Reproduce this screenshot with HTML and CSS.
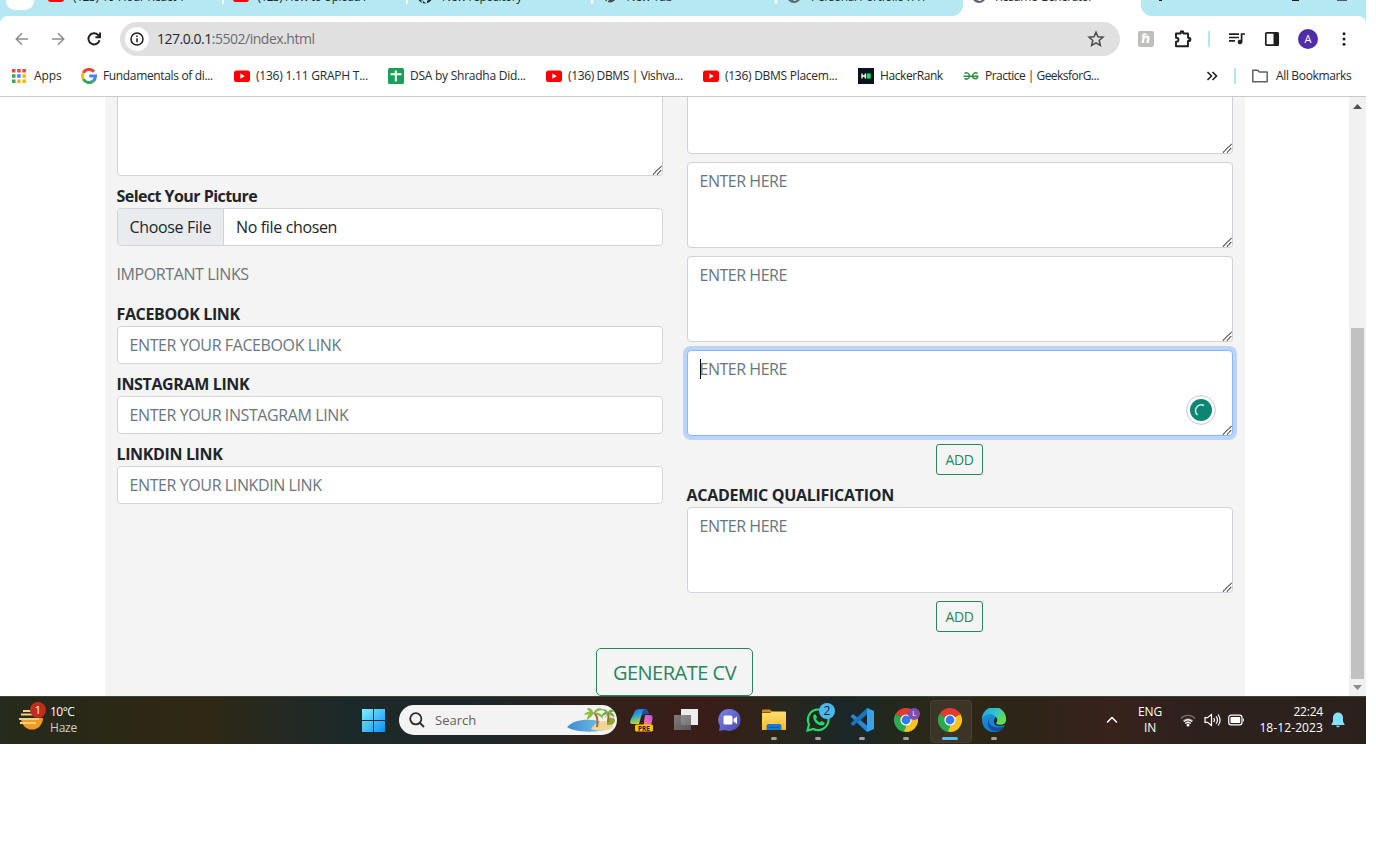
FILE: index.html
```html
<!DOCTYPE html>
<html lang="en">
<head>
<meta charset="utf-8">
<title>Resume Generator</title>
<link rel="stylesheet" href="styles.css">
</head>
<body>
<svg class="defs" width="0" height="0">
  <defs>
    <symbol id="yt" viewBox="0 0 16 16"><rect y="2.5" width="16" height="11.5" rx="2.6" fill="#f00"/><path d="M6.4 5.6v5.2l4.4-2.6z" fill="#fff"/></symbol>
    <symbol id="globe" viewBox="0 0 16 16"><circle cx="8" cy="8" r="6" fill="none" stroke="#5f6368" stroke-width="2"/><path d="M3 6l4 1 1 3-2 3M9 2l3 3-2 3 3 2" fill="none" stroke="#5f6368" stroke-width="1.5"/></symbol>
    <symbol id="chrome" viewBox="0 0 24 24"><path d="M12 12L1.6 6A12 12 0 0 1 22.4 6z" fill="#e33b2e"/><path d="M12 12L22.4 6A12 12 0 0 1 12 24z" fill="#fcc31e"/><path d="M12 12L12 24A12 12 0 0 1 1.6 6z" fill="#2da94f"/><path d="M12 6.5h10.6L21 4H11z" fill="#e33b2e"/><path d="M16.8 14.7L12 24l-2-1 3-6z" fill="#fcc31e"/><path d="M7.2 14.8L1.6 6 1 8l4 8z" fill="#2da94f"/><circle cx="12" cy="12" r="5.6" fill="#fff"/><circle cx="12" cy="12" r="4.4" fill="#2f7cf0"/></symbol>
    <symbol id="grip" viewBox="0 0 10 10"><path d="M1 9.5L9.5 1M5 9.5L9.5 5" fill="none" stroke="#222" stroke-width="1.1" stroke-dasharray="1.2 .4"/></symbol>
    <linearGradient id="win" x1="0" y1="0" x2="1" y2="1"><stop offset="0" stop-color="#7ff0ff"/><stop offset="1" stop-color="#0a90f5"/></linearGradient>
    <linearGradient id="cop1" x1="0" y1="0" x2="0.3" y2="1"><stop offset="0" stop-color="#1c6ee0"/><stop offset=".5" stop-color="#2fa5cf"/><stop offset="1" stop-color="#c5d52d"/></linearGradient>
    <linearGradient id="cop2" x1="1" y1="0" x2="0" y2="1"><stop offset="0" stop-color="#a45cf0"/><stop offset=".5" stop-color="#e867b8"/><stop offset="1" stop-color="#ff9b50"/></linearGradient>
    <linearGradient id="tv" x1="0" y1="0" x2="1" y2="1"><stop offset="0" stop-color="#8a8a8a"/><stop offset="1" stop-color="#5e5e5e"/></linearGradient>
    <linearGradient id="chat" x1="0" y1="0" x2="1" y2="1"><stop offset="0" stop-color="#7b83e8"/><stop offset="1" stop-color="#4b4ab0"/></linearGradient>
    <linearGradient id="fold" x1="0" y1="0" x2="0" y2="1"><stop offset="0" stop-color="#ffdf73"/><stop offset="1" stop-color="#fbb92c"/></linearGradient>
    <linearGradient id="edgeA" x1="0" y1="0" x2="1" y2=".5"><stop offset="0" stop-color="#1fa3dc"/><stop offset=".55" stop-color="#2fc5cf"/><stop offset="1" stop-color="#68dc4a"/></linearGradient>
    <linearGradient id="edgeB" x1="0" y1="0" x2="0" y2="1"><stop offset="0" stop-color="#1c8fd8"/><stop offset="1" stop-color="#1378cf"/></linearGradient>
    <linearGradient id="sea" x1="0" y1="0" x2="1" y2="0"><stop offset="0" stop-color="#3d8ed2"/><stop offset="1" stop-color="#7cc6ee"/></linearGradient>
  </defs>
</svg>
<div class="screen">
  <header class="tabs">
    <div class="tabs-left">
      <span class="tab-search"></span>
      <div class="tab"><svg class="fav"><use href="#yt"/></svg><span>(123) 10-Hour React T</span></div>
      <div class="tab"><svg class="fav"><use href="#yt"/></svg><span class="tight">(123) How to Upload I</span></div>
      <div class="tab"><svg class="fav" viewBox="0 0 16 16"><circle cx="8" cy="8" r="7.5" fill="#24292f"/><path d="M6 16v-3c-2 0-2-2-3-2m7 5v-3c3-1 3-6 1-7l-6 0c-2 2-1 6 1 7z" fill="#b6e8f2"/></svg><span>New repository</span></div>
      <div class="tab"><svg class="fav" viewBox="0 0 16 16"><circle cx="8" cy="8" r="6.5" fill="#45505a"/><path d="M8 8l-3 6M8 8h6" stroke="#b6e8f2" stroke-width="1.5"/></svg><span>New Tab</span></div>
      <div class="tab last"><svg class="fav"><use href="#globe"/></svg><span>Personal Portfolio : A P</span></div>
    </div>
    <div class="tab active"><svg class="fav"><use href="#globe"/></svg><span>Resume Generator</span></div>
    <div class="tabs-right"><i class="w1"></i><i class="w2"></i><i class="w3"></i></div>
  </header>

  <div class="bar-back">
  <nav class="toolbar">
    <svg class="tb" viewBox="0 0 20 20" fill="none" stroke="#8f8f8f" stroke-width="1.6"><path d="M16 10H4.5M10 4.3L4.3 10l5.7 5.7"/></svg>
    <svg class="tb fwd" viewBox="0 0 20 20" fill="none" stroke="#8f8f8f" stroke-width="1.6"><path d="M4 10h11.500M10 4.300l5.700 5.700-5.700 5.700"/></svg>
    <svg class="tb rel" viewBox="0 0 20 20" fill="none" stroke="#1f1f1f" stroke-width="1.9"><path d="M15.500 11.200a5.600 5.600 0 1 1-1.400-5.200l1.600 1.700"/><path d="M16 3.600v4.600h-4.600"/></svg>
    <div class="omnibox">
      <span class="info"><svg width="14" height="14" viewBox="0 0 14 14" fill="none" stroke="#1f1f1f"><circle cx="7" cy="7" r="6" stroke-width="1.5"/><path d="M7 6.200v4M7 3.600v1.500" stroke-width="1.500"/></svg></span>
      <span class="url"><b>127.0.0.1</b>:5502/index.html</span>
      <svg class="star" viewBox="0 0 18 18" fill="none" stroke="#4a4a4a" stroke-width="1.500"><path d="M9 2.200l2 4.600 5 .4-3.800 3.300 1.200 4.900L9 12.800l-4.400 2.600 1.200-4.900L2 7.200l5-.4z"/></svg>
    </div>
    <span class="honey">ℏ</span>
    <svg class="puzzle" viewBox="0 0 20 20"><path d="M3 4.500h4.500v-.8a1.500 1.500 0 0 1 3 0v.8h4.500v4.300h.8a1.600 1.600 0 0 1 0 3.200h-.8v5.200H3v-4.500c3.300 0 3.300-4 0-4z" fill="none" stroke="#1f1f1f" stroke-width="1.900" stroke-linejoin="round"/><path d="M7.500 4.500a1.800 1.800 0 0 1 3.400 0zM15.500 8.500a1.900 1.900 0 0 1 0 3.600z" fill="#1f1f1f"/></svg>
    <span class="vline"></span>
    <svg class="music" viewBox="0 0 18 18" fill="none" stroke="#1f1f1f" stroke-width="1.700"><path d="M1 4.200h10M1 7.500h10M1 10.800h6M13.600 12V4h3.400"/><circle cx="12" cy="12" r="1.900" fill="#1f1f1f" stroke-width="1"/></svg>
    <svg class="side" viewBox="0 0 16 16"><rect x="1.800" y="1.800" width="12.400" height="12.400" rx="1" fill="none" stroke="#1f1f1f" stroke-width="1.700"/><path d="M9.500 1.500h5v13h-5z" fill="#1f1f1f"/></svg>
    <span class="avatar">A</span>
    <svg class="dots" viewBox="0 0 4 16" fill="#1f1f1f"><circle cx="2" cy="2.700" r="1.500"/><circle cx="2" cy="8" r="1.500"/><circle cx="2" cy="13.300" r="1.500"/></svg>
  </nav>
  </div>

  <nav class="bookmarks">
    <a class="b1"><svg viewBox="0 0 16 16"><path d="M1 1h3.500v3.500H1zM6.200 1h3.500v3.500H6.200zM11.400 1h3.500v3.500h-3.500z" fill="#dc4b3e"/><path d="M1 6.200h3.500v3.500H1zM1 11.400h3.500v3.500H1z" fill="#34a853"/><path d="M6.200 6.200h3.500v3.500H6.200z" fill="#4285f4"/><path d="M11.400 6.200h3.500v3.500h-3.500zM6.200 11.400h3.500v3.500H6.200zM11.400 11.400h3.500v3.500h-3.500z" fill="#f4b80c"/></svg><span>Apps</span></a>
    <a class="b2"><svg viewBox="0 0 16 16" fill="none" stroke-width="3"><path d="M13 3.700A6.500 6.500 0 0 0 2.300 4.900" stroke="#ea4335"/><path d="M2.300 4.900a6.500 6.500 0 0 0 0 6.200" stroke="#fbbc04"/><path d="M2.300 11.100A6.500 6.500 0 0 0 12.200 13" stroke="#34a853"/><path d="M12.200 13a6.300 6.300 0 0 0 2.300-4.900H8.200" stroke="#4285f4"/></svg><span>Fundamentals of di...</span></a>
    <a class="b3"><svg><use href="#yt"/></svg><span>(136) 1.11 GRAPH T...</span></a>
    <a class="b4"><svg viewBox="0 0 16 16"><rect width="16" height="16" rx="1.500" fill="#16a05a"/><path d="M2.500 6.300h11M7.800 2.500v11" stroke="#fff" stroke-width="2"/></svg><span>DSA by Shradha Did...</span></a>
    <a class="b5"><svg><use href="#yt"/></svg><span>(136) DBMS | Vishva...</span></a>
    <a class="b6"><svg><use href="#yt"/></svg><span>(136) DBMS Placem...</span></a>
    <a class="b7"><svg viewBox="0 0 16 16"><path d="M0 0h16v16H0z" fill="#0e141e"/><path d="M4 5.500v5M7.300 5.500v5M4 8h3" stroke="#fff" stroke-width="1.300"/><path d="M8.700 5.500h4v5h-4z" fill="#1ce06a"/></svg><span>HackerRank</span></a>
    <a class="b8"><svg viewBox="0 0 16 16" fill="none" stroke="#2f8d46" stroke-width="1.500"><path d="M.5 8.200h15M1.500 5.500c2-1.500 5-.5 5 2.500s-3.300 4-5 2.200M14.500 5.500c-2-1.500-5-.5-5 2.500s4.900 4 5.200.4"/></svg><span>Practice | GeeksforG...</span></a>
    <svg class="more" viewBox="0 0 12 10" fill="none" stroke="#1f1f1f" stroke-width="1.600"><path d="M1.500 1l4 4-4 4M6.500 1l4 4-4 4"/></svg>
    <span class="vline v2"></span>
    <a class="b9"><svg viewBox="0 0 16 16"><path d="M.8 2.300h5l1.600 1.800h7.800v9.600H.8z" fill="none" stroke="#5f6368" stroke-width="1.500" stroke-linejoin="round"/></svg><span>All Bookmarks</span></a>
  </nav>

  <main class="viewport">
    <div class="sheet">
      <div class="cols">
        <section class="col">
          <div class="area cut-l"><textarea></textarea><svg class="grip"><use href="#grip"/></svg></div>
          <label class="t-pic">Select Your Picture</label>
          <div class="file"><span class="choose">Choose File</span><span class="nofile">No file chosen</span></div>
          <p class="muted">IMPORTANT LINKS</p>
          <label>FACEBOOK LINK</label>
          <input type="text" placeholder="ENTER YOUR FACEBOOK LINK">
          <label>INSTAGRAM LINK</label>
          <input type="text" placeholder="ENTER YOUR INSTAGRAM LINK">
          <label>LINKDIN LINK</label>
          <input type="text" placeholder="ENTER YOUR LINKDIN LINK">
        </section>
        <section class="col">
          <div class="area cut-r"><textarea></textarea><svg class="grip"><use href="#grip"/></svg></div>
          <div class="area"><textarea placeholder="ENTER HERE"></textarea><svg class="grip"><use href="#grip"/></svg></div>
          <div class="area"><textarea placeholder="ENTER HERE"></textarea><svg class="grip"><use href="#grip"/></svg></div>
          <div class="area focused"><textarea placeholder="ENTER HERE"></textarea><svg class="grip"><use href="#grip"/></svg><span class="caret"></span>
            <svg class="grammar" viewBox="0 0 30 30"><circle cx="15" cy="15" r="14.400" fill="#fff" stroke="#c5c8d8"/><circle cx="15" cy="15" r="11" fill="#0c8573"/><path d="M18 10.500a5.800 5.800 0 0 0-6.500 9.500" fill="none" stroke="#cfeee8" stroke-width="1.600"/></svg></div>
          <button class="add">ADD</button>
          <label class="t-acad">ACADEMIC QUALIFICATION</label>
          <div class="area flush"><textarea placeholder="ENTER HERE"></textarea><svg class="grip"><use href="#grip"/></svg></div>
          <button class="add">ADD</button>
        </section>
      </div>
      <button class="generate">GENERATE CV</button>
    </div>
    <aside class="scroll"><svg viewBox="0 0 9 5"><path d="M4.500 0L9 5H0z" fill="#505050"/></svg><div class="thumb"></div><svg viewBox="0 0 9 5"><path d="M0 0h9L4.500 5z" fill="#8c8c8c"/></svg></aside>
  </main>

  <footer class="taskbar">
    <div class="weather">
      <svg viewBox="0 0 28 30"><path d="M3 16h22a11 11.500 0 0 1-22 0z" fill="#f39a24"/><path d="M5 9h8M3 12.500h18M1 17h20M2 21h16" stroke="#f5cf83" stroke-width="1.800"/><circle cx="20" cy="8" r="8" fill="#c42b1f"/><text x="20" y="12" text-anchor="middle" fill="#fff" class="badge-text">1</text></svg>
      <div class="wtext"><span>10°C</span><small>Haze</small></div>
    </div>
    <svg class="start" viewBox="0 0 23 23"><path d="M0 0h11v11H0zM12 0h11v11H12zM0 12h11v11H0zM12 12h11v11H12z" fill="url(#win)"/></svg>
    <div class="search">
      <svg class="lens" viewBox="0 0 16 16" fill="none" stroke="#2b2b2b" stroke-width="1.800"><circle cx="6.800" cy="6.800" r="5.600"/><path d="M11 11l4 4"/></svg>
      <span>Search</span>
      <svg class="beach" viewBox="0 0 50 26"><path d="M0 20C6 13 20 11 32 14l10 7c-7 5-35 5-42-1z" fill="url(#sea)"/><path d="M24 22c5-8 14-9 19-7 4 2 4 5 0 7-5 2-15 2-19 0z" fill="#f2d493"/><path d="M40 12q7-3 8 1c0 4-3 5-8 5z" fill="#90a83a"/><path d="M27 5q5 6 3 15M41 6q1 4 0 9" stroke="#a36a34" stroke-width="2" fill="none"/><path d="M27 6c-4-3-8-1-10 2 4-1 6 0 10-2zM27 6c-5 0-7 3-7 7 3-2 5-4 7-7zM27 6c1-5 6-6 10-3-4 0-6 1-10 3zM27 6c5-1 9 1 9 6-3-3-5-4-9-6zM26 6c0-4-3-5-6-5 1 3 3 4 6 5z" fill="#8abb42"/><path d="M41 6c-3-2-5 0-6 3l6-3c4-1 6 1 6 4l-6-4c1-3 3-4 6-2l-6 2c-1-3-3-4-5-3zM41 6l-3 5M41 6l3 5" fill="#6da640" stroke="#6da640" stroke-width=".6"/></svg>
    </div>
    <div class="apps">
      <div class="app"><svg viewBox="0 0 24 24"><path d="M5 3Q6 1 9 1h6q2 0 3 3l.5 2H14q-2 0-3 3l-2 7H3q-4 0-2.500-4z" fill="url(#cop1)"/><path d="M15 7h5q3 0 2.500 4l-1.500 7h-9q2 0 2-4z" fill="url(#cop2)"/><path d="M11 9q1-3 3-3h4.500L18 4q-1-3-3-3-2 0-3 4z" fill="#1b4fb5"/><rect x="5" y="16.500" width="18" height="7" rx="1.500" fill="#ffc20e"/><text x="14" y="22.500" text-anchor="middle" class="pre">PRE</text></svg></div>
      <div class="app"><svg viewBox="0 0 24 24"><path d="M7 1h17v16H7z" fill="#ececec"/><path d="M0 7h17v15H0z" fill="url(#tv)" fill-opacity=".88"/></svg></div>
      <div class="app"><svg viewBox="0 0 24 24"><path d="M12 1a11 11 0 1 1-5 21L1 23l1-5A11 11 0 0 1 12 1z" fill="url(#chat)"/><rect x="5.500" y="7.500" width="9" height="9" rx="1.500" fill="#fff"/><path d="M15.500 11l3.500-2.500v7.500l-3.500-2.500z" fill="#fff"/></svg></div>
      <div class="app run"><svg viewBox="0 0 24 24"><path d="M0 2.500Q0 1.500 1 1.500h7l3 3H0z" fill="#d58b12"/><path d="M0 5h8l2-1.500h13q1 0 1 1V22H0z" fill="url(#fold)"/><path d="M4.500 22v-4q0-2 2-2h11q2 0 2 2v4z" fill="#1479cf"/><path d="M7 19.500h10" stroke="#0c5ba8"/></svg></div>
      <div class="app run"><svg viewBox="0 0 24 24"><path d="M1.500 22.500l1.500-6A10.300 10.300 0 1 1 7.500 21z" fill="none" stroke="#2bd567" stroke-width="2.200"/><path d="M7.500 7q2-2 3 1l.5 1.500-1 1.500q1.500 2.500 4 3.500l1.500-1.500 3 1.500q.5 3-3 3C11 17.500 6 12 7.500 7z" fill="#2bd567"/></svg><span class="badge">2</span></div>
      <div class="app run"><svg viewBox="0 0 24 24"><path d="M17 17.500L3 6 .5 8.500 17 24z" fill="#2489d8"/><path d="M17 0v6.500L3 18 .5 15.500z" fill="#1a75c0"/><path d="M17 0l7 3v18l-7 3z" fill="#31a5f0"/></svg></div>
      <div class="app run"><svg><use href="#chrome"/></svg><span class="badge purple">L</span></div>
      <div class="app run on"><svg><use href="#chrome"/></svg></div>
      <div class="app run"><svg viewBox="0 0 24 24"><path d="M0 11C1 4 8 5 14 8l-2 4c-1 4 3 8 11 5A12 12 0 0 1 0 12z" fill="url(#edgeB)"/><path d="M7 12c-1 6 6 9.500 15.500 6.500C18 25 8 25 6 17c-1-4 1-7 5-8q-3.500 0-4 3z" fill="#114f98"/><path d="M0 11A12 12 0 0 1 24 11c.5 5-4 6.500-8 5.500-2-.7-2.200-1.500-1.300-2.500 1-1.300.8-3-.2-4.300C11 5 3 5 0 11z" fill="url(#edgeA)"/></svg></div>
    </div>
    <div class="tray">
      <svg class="chev" viewBox="0 0 12 8" fill="none" stroke="#fff" stroke-width="1.500"><path d="M1 6.500l5-5 5 5"/></svg>
      <div class="lang"><span>ENG</span><span>IN</span></div>
      <svg class="wifi" viewBox="0 0 16 14" fill="none"><path d="M1 5.500a9.500 9.500 0 0 1 14 0" stroke="#796c67" stroke-width="1.300"/><path d="M3 8a7 7 0 0 1 10 0" stroke="#796c67" stroke-width="1.300"/><path d="M3.800 8.500q4.200-3.500 8.400 0M5.200 10.500q2.800-2.500 5.600 0" stroke="#fff" stroke-width="1.300"/><circle cx="8" cy="12" r="1.500" fill="#fff"/></svg>
      <svg class="vol" viewBox="0 0 17 14" fill="none" stroke="#fff" stroke-width="1.200"><path d="M1 4.700h2.500L7.500 1.500v11L3.500 9.300H1zM9.700 5q1.500 2 0 4M12 3.300q3 3.700 0 7.400M14 1.500q4.200 5.500 0 11"/></svg>
      <svg class="bat" viewBox="0 0 17 12"><rect x=".7" y="1.200" width="13.300" height="9.600" rx="2.300" fill="none" stroke="#fff" stroke-width="1.200"/><rect x="2.500" y="3" width="9.700" height="6" rx=".8" fill="#fff"/><path d="M15 4q2 2 0 4z" fill="#fff"/></svg>
      <div class="clock"><span>22:24</span><span class="date">18-12-2023</span></div>
      <svg class="bell" viewBox="0 0 14 16" fill="#85e2ff"><path d="M7 .500a5 5 0 0 1 5 5v4l1.800 3.500H.2L2 9.500v-4a5 5 0 0 1 5-5zM4.800 13.800h4.400q-2.200 3-4.400 0z"/></svg>
    </div>
  </footer>
</div>
</body>
</html>
```
FILE: styles.css
```css
* { box-sizing: border-box; }
body { margin: 0; background: #fff; font-family: "Open Sans", "Noto Sans", sans-serif; color: #212529; overflow: hidden; }
.defs { position: absolute; }
.screen { width: 1366px; height: 744px; display: flex; flex-direction: column; overflow: hidden; }
svg { display: block; flex: none; }

/* tab strip */
.tabs { height: 16px; flex: none; display: flex; overflow: hidden; font-size: 12px; color: #1f2a30; }
.tabs-left { width: 963px; background: #b6e8f2; border-bottom-right-radius: 11px; display: flex; padding-left: 6px; }
.tab-search { width: 28px; height: 10px; background: #fff; border-radius: 0 0 9px 9px; margin-right: 5px; }
.tab { width: 184.500px; height: 16px; display: flex; padding-left: 9px; position: relative; overflow: hidden; }
.tabs-left .tab:not(.last)::after { content: ""; position: absolute; right: 0; top: 0; width: 2px; height: 4px; background: #fff; }
.tab span { margin: -11px 0 0 9px; line-height: 16px; white-space: nowrap; letter-spacing: -.4px; }
.tab .tight { letter-spacing: -.6px; }
.tab .fav { width: 16px; height: 16px; margin-top: -12px; }
.active { width: 178px; padding-left: 8px; }
.active span { margin-left: 8px; letter-spacing: -.5px; }
.tabs-right { flex: 1; background: #b6e8f2; border-bottom-left-radius: 11px; display: flex; }
.tabs-right i { height: 1px; background: #1f1f1f; }
.w1 { width: 3px; margin-left: 18px; }
.w2 { width: 7px; margin-left: 130px; }
.w3 { width: 10px; margin-left: 38px; opacity: .7; }

/* toolbar */
.bar-back { background: #b6e8f2; flex: none; }
.toolbar { height: 46px; background: #fff; border-radius: 8px 8px 0 0; display: flex; align-items: center; padding-left: 12px; }
.tb { width: 20px; height: 20px; }
.fwd { margin-left: 16px; }
.rel { margin-left: 16px; }
.omnibox { width: 1000px; height: 34px; margin-left: 16px; border-radius: 17px; background: #e0e0e1; display: flex; align-items: center; padding: 0 15px 0 5px; }
.info { width: 24px; height: 24px; border-radius: 50%; background: #fff; display: flex; align-items: center; justify-content: center; }
.url { margin-left: 8px; font-size: 14px; line-height: 20px; color: #6a6d70; letter-spacing: -.48px; flex: 1; }
.url b { font-weight: 400; color: #27292b; }
.star { width: 18px; height: 18px; }
.honey { width: 16px; height: 16px; margin-left: 18px; border-radius: 2px; background: #bebebe; color: #fff; font: bold 13px/16px "DejaVu Sans", sans-serif; text-align: center; }
.puzzle { width: 20px; height: 20px; margin-left: 19px; }
.vline { width: 2px; height: 16px; background: #b3e7f1; margin-left: 15px; }
.music { width: 18px; height: 18px; margin-left: 18px; }
.side { width: 16px; height: 16px; margin-left: 18px; }
.avatar { width: 20px; height: 20px; border-radius: 50%; margin-left: 18px; background: #512da8; color: #fff; font-size: 11px; line-height: 20px; text-align: center; }
.dots { width: 4px; height: 16px; margin-left: 24px; }

/* bookmarks */
.bookmarks { height: 35px; flex: none; border-bottom: 1px solid #c9cacc; display: flex; align-items: center; padding: 0 0 6px 11px; font-size: 12px; line-height: 16px; letter-spacing: -.35px; color: #27292b; }
.bookmarks a { display: flex; align-items: center; gap: 6px; height: 16px; white-space: nowrap; }
.bookmarks a span { margin-top: -1px; }
.bookmarks a svg { width: 16px; height: 16px; }
.b1 { width: 70px; letter-spacing: -.1px; } .b1 span { margin-left: 1px; } .b2 { width: 153px; } .b3 { width: 154px; letter-spacing: -.22px; } .b4 { width: 158px; letter-spacing: -.25px; }
.b5 { width: 157px; letter-spacing: -.37px; } .b6 { width: 155px; letter-spacing: -.27px; } .b7 { width: 105px; letter-spacing: -.42px; } .b8 { width: 243px; letter-spacing: -.52px; }
.more { width: 12px; height: 10px; }
.v2 { margin-left: 16px; }
.b9 { margin-left: 16px; }
.bookmarks .b9 span { margin-left: 2px; }

/* page */
.viewport { height: 599px; flex: none; display: flex; padding-left: 105px; }
.sheet { width: 1140px; background: #f4f4f4; overflow: hidden; margin-right: 104px; display: flex; flex-direction: column; }
.cols { display: flex; gap: 24px; padding: 0 12px; height: 551px; flex: none; }
.col { width: 546px; display: flex; flex-direction: column; font-size: 16px; }
.area { height: 86px; position: relative; margin-top: 8px; flex: none; }
.area.flush { margin-top: 0; }
.area.cut-l { height: 87px; margin-top: -8px; }
.area.cut-r { height: 65px; margin-top: -8px; }
textarea, input { width: 100%; height: 38px; display: block; border: 1px solid #ced4da; border-radius: 4px; background: #fff; padding: 6px 11.500px; font: 16px/24px "Open Sans", "Noto Sans", sans-serif; letter-spacing: -.4px; resize: none; outline: none; }
textarea { height: 100%; overflow: hidden; letter-spacing: -.47px; }
input { flex: none; }
::placeholder { color: #6c757d; opacity: 1; }
.focused textarea { border-color: #86b7fe; box-shadow: 0 0 0 4px #bdd4fa; }
.grip { position: absolute; width: 10px; height: 10px; right: 1px; bottom: 1px; }
.caret { position: absolute; left: 13px; top: 9px; width: 1px; height: 20px; background: #000; }
.grammar { position: absolute; width: 30px; height: 30px; left: 499px; top: 45px; }
label { height: 24px; line-height: 24px; margin-top: 8px; font-weight: 700; letter-spacing: -.36px; text-indent: -.5px; flex: none; white-space: nowrap; }
.t-pic { letter-spacing: -.55px; }
.t-acad { letter-spacing: -.28px; }
.file { height: 38px; flex: none; border: 1px solid #ced4da; border-radius: 4px; background: #fff; display: flex; line-height: 36px; overflow: hidden; }
.choose { width: 106px; padding-left: 11.500px; background: #e9ecef; border-right: 1px solid #ced4da; letter-spacing: -.33px; }
.nofile { padding-left: 12px; letter-spacing: -.35px; }
.muted { margin: 16px 0 8px; line-height: 24px; height: 24px; color: #6c757d; letter-spacing: -.4px; text-indent: -.5px; flex: none; }
button { align-self: center; border: 1px solid #2b845c; background: transparent; color: #2b845c; border-radius: 3px; padding: 0; font-family: "Open Sans", "Noto Sans", sans-serif; flex: none; }
.add { width: 47px; height: 31px; font-size: 14px; margin: 8px 1px 0 0; letter-spacing: -.4px; }
.generate { width: 157px; height: 48px; font-size: 20px; border-radius: 5px; letter-spacing: -.5px; margin-right: 1px; }
.scroll { width: 17px; background: #f1f1f1; display: flex; flex-direction: column; align-items: center; padding-top: 7px; }
.scroll svg { width: 9px; height: 5px; }
.thumb { width: 13px; height: 351px; margin: 219px 0 6px; background: #c1c1c1; flex: none; }

/* taskbar */
.taskbar { height: 48px; flex: none; display: flex; align-items: center; border-top: 1px solid #3c4738; padding-bottom: 1px; color: #fff; font-size: 12px;
  background: linear-gradient(90deg, #252b1d 0, #2a2816 100px, #302814 200px, #232923 290px, #1c292a 350px, #202728 500px, #35201a 620px, #3a1d18 710px, #29271b 780px, #1b2728 850px, #22281e 890px, #2e2816 950px, #2c2518 1010px, #38221c 1110px, #2d211d 1200px, #2b211c 1366px); }
.weather { width: 362px; display: flex; align-items: center; padding-left: 18px; }
.weather > svg { width: 28px; height: 30px; margin-top: -6px; }
.badge-text { font-size: 11px; }
.wtext { margin-left: 4px; display: flex; flex-direction: column; line-height: 16px; letter-spacing: -.5px; }
.wtext small { font-size: 12px; color: #d2cec2; letter-spacing: -.2px; }
.start { width: 23px; height: 23px; }
.search { width: 218px; height: 30px; margin-left: 14px; border-radius: 15px; background: #f3f3f3; color: #5f5f5f; font-size: 13px; display: flex; align-items: center; padding-left: 10px; overflow: hidden; }
.lens { width: 16px; height: 16px; }
.search span { margin-left: 10px; width: 132px; }
.beach { width: 50px; height: 26px; }
.apps { display: flex; margin-left: 3px; height: 46px; }
.app { width: 44px; height: 46px; position: relative; display: flex; align-items: center; justify-content: center; }
.app svg { width: 24px; height: 24px; position: relative; }
.on::before { content: ""; position: absolute; left: 2px; top: 3px; width: 40px; height: 41px; border-radius: 4px; background: #3a3527; border: 1px solid #454034; }
.run::after { content: ""; position: absolute; left: 19px; bottom: 3px; width: 6px; height: 3px; border-radius: 2px; background: #a5a199; }
.on::after { left: 14px; width: 16px; background: #5cbcf0; }
.pre { font: 700 6.500px "Open Sans", sans-serif; fill: #241a00; }
.badge { position: absolute; left: 23px; top: 6px; width: 16px; height: 16px; border-radius: 50%; background: #4cb8f2; color: #10242e; font-size: 12px; line-height: 16px; text-align: center; }
.badge.purple { left: 24px; top: 11px; width: 12px; height: 12px; font-size: 7px; line-height: 12px; background: #7f4db0; color: #fff; }
.tray { flex: 1; display: flex; align-items: center; }
.chev { width: 12px; height: 8px; margin-left: 90px; }
.lang { width: 26px; margin-left: 19px; display: flex; flex-direction: column; align-items: center; line-height: 16px; letter-spacing: -.2px; }
.wifi { width: 16px; height: 14px; margin-left: 17px; }
.vol { width: 17px; height: 14px; margin-left: 8px; }
.bat { width: 17px; height: 12px; margin-left: 7px; }
.clock { width: 78px; display: flex; flex-direction: column; align-items: flex-end; line-height: 16px; letter-spacing: -.2px; white-space: nowrap; }
.date { letter-spacing: .1px; }
.bell { width: 14px; height: 16px; margin-left: 8px; }
```
